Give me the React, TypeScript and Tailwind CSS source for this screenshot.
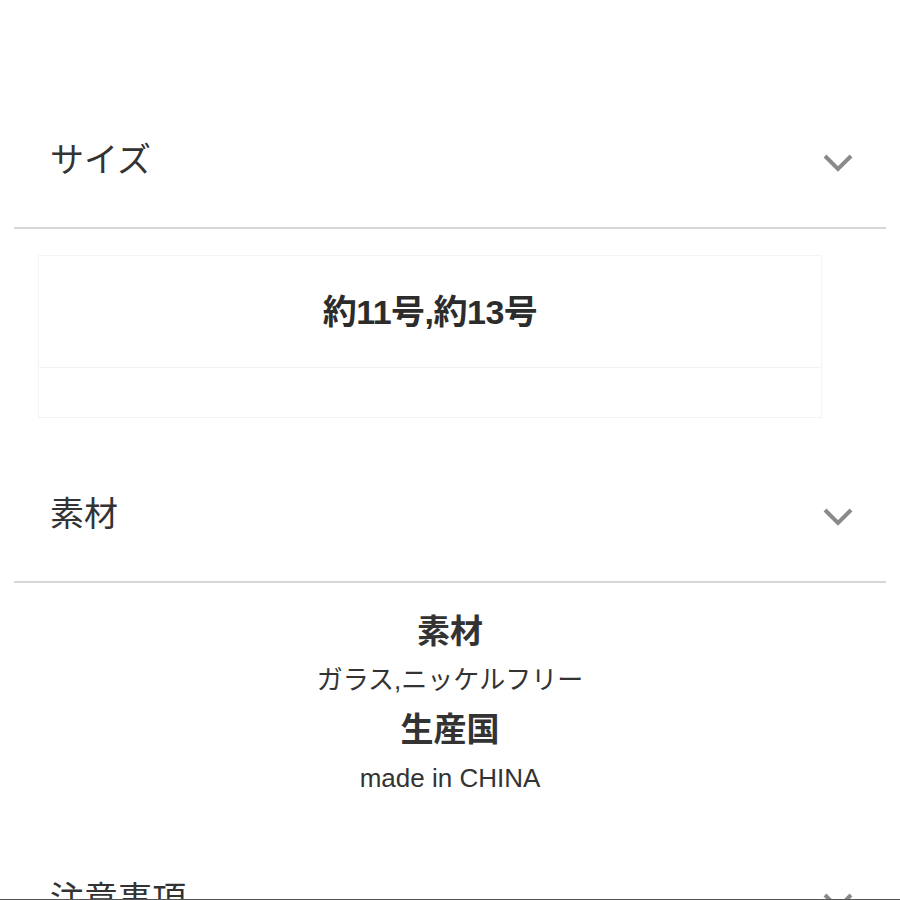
import React from "react";

const FONT = {
  fontFamily: '"Liberation Sans", "Noto Sans CJK JP", sans-serif',
};

function Chevron() {
  return (
    <svg width="30" height="20" viewBox="0 0 30 20" className="mt-[6px] shrink-0">
      <polyline
        points="2,3 15,16 28,3"
        fill="none"
        stroke="#8a8a8a"
        strokeWidth="4"
        strokeLinecap="butt"
        strokeLinejoin="miter"
      />
    </svg>
  );
}

function SectionHeader({ title }: { title: string }) {
  return (
    <div className="mx-[14px] flex h-[137px] items-center justify-between border-b-2 border-[#d6d6d6] pl-[36px] pr-[33px]">
      <span className="text-[34px] leading-none text-[#333]">{title}</span>
      <Chevron />
    </div>
  );
}

export default function App() {
  return (
    <div
      className="relative h-[900px] w-[900px] overflow-hidden bg-white pt-[92px]"
      style={FONT}
    >
      <SectionHeader title="サイズ" />

      {/* size chart image area */}
      <div className="ml-[38px] mt-[26px] h-[163px] w-[784px] border border-[#f4f4f4]">
        <div className="flex h-[112px] items-center justify-center border-b border-[#f2f2f2]">
          <span className="text-[34px] font-bold leading-none tracking-[-0.5px] text-[#2c2c2c]">
            約11号,約13号
          </span>
        </div>
      </div>

      <div className="mt-[28px]">
        <SectionHeader title="素材" />
      </div>

      <div className="flex flex-col items-center pt-[24px] text-[#333]">
        <div className="text-[33px] font-bold leading-[49px]">素材</div>
        <div className="text-[26px] leading-[49px]">ガラス,ニッケルフリー</div>
        <div className="text-[33px] font-bold leading-[49px]">生産国</div>
        <div className="text-[26px] leading-[49px]">made in CHINA</div>
      </div>

      <div className="mt-[28px]">
        <SectionHeader title="注意事項" />
      </div>

      {/* bottom edge rule */}
      <div className="absolute bottom-0 left-0 h-px w-full bg-[#555]" />
    </div>
  );
}
